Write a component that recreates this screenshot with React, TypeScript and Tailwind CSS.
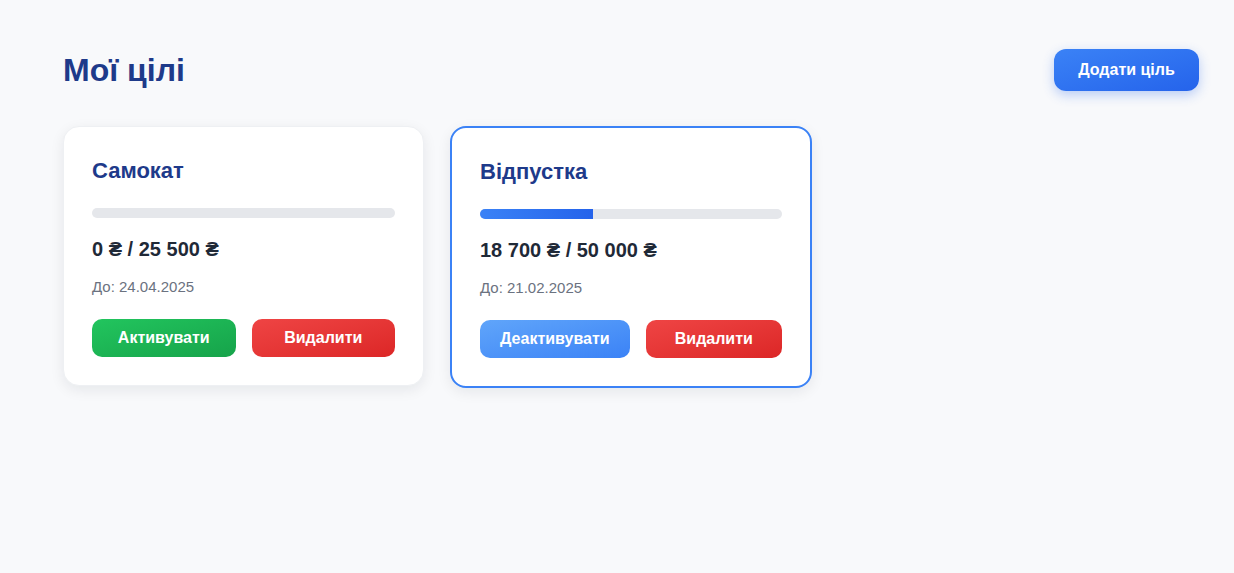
const goals = [
  { title: "Самокат", saved: 0, target: 25500, date: "24.04.2025", active: false },
  { title: "Відпустка", saved: 18700, target: 50000, date: "21.02.2025", active: true },
];

function money(n: number) {
  return n.toLocaleString("uk-UA").replace(/\s/g, " ") + " ₴";
}

function GoalCard({ goal }: { goal: (typeof goals)[number] }) {
  const pct = Math.round((goal.saved / goal.target) * 1000) / 10;
  return (
    <div
      className={
        goal.active
          ? "w-[362px] rounded-2xl border-2 border-[#3b82f6] bg-white px-7 pt-7 pb-7 shadow-[0_4px_14px_rgba(15,23,42,0.08)]"
          : "w-[361px] rounded-2xl border border-[#eef0f3] bg-white px-7 pt-7 pb-7 shadow-[0_4px_14px_rgba(15,23,42,0.08)]"
      }
    >
      <h3 className="text-[22px] leading-[32px] font-bold text-[#1e3a8a]">{goal.title}</h3>

      <div className="mt-[21px] h-[10px] w-full overflow-hidden rounded-full bg-[#e5e7eb]">
        <div
          className="h-full bg-gradient-to-r from-[#3b82f6] to-[#2563eb]"
          style={{ width: pct + "%" }}
        />
      </div>

      <p className="mt-[17px] text-[20px] leading-[28px] font-bold text-[#1f2937]">
        {money(goal.saved)} / {money(goal.target)}
      </p>

      <p className="mt-[13px] text-[15px] leading-[22px] text-[#6b7280]">До: {goal.date}</p>

      <div className="mt-[21px] flex gap-4">
        {goal.active ? (
          <button className="h-[38px] flex-1 rounded-[10px] bg-gradient-to-br from-[#60a5fa] to-[#3b82f6] px-5 text-[16px] font-bold text-white">
            Деактивувати
          </button>
        ) : (
          <button className="h-[38px] flex-1 rounded-[10px] bg-gradient-to-br from-[#22c55e] to-[#16a34a] px-5 text-[16px] font-bold text-white">
            Активувати
          </button>
        )}
        <button className="h-[38px] flex-1 rounded-[10px] bg-gradient-to-br from-[#ef4444] to-[#dc2626] px-5 text-[16px] font-bold text-white">
          Видалити
        </button>
      </div>
    </div>
  );
}

export default function App() {
  return (
    <div
      className="min-h-[573px] bg-[#f8f9fb] pt-[49px] pl-[63px] pr-[35px]"
      style={{ fontFamily: '"Liberation Sans", Arial, sans-serif' }}
    >
      <div className="flex items-center justify-between">
        <h1 className="text-[32px] leading-[42px] font-bold text-[#1e3a8a]">Мої цілі</h1>
        <button className="h-[42px] w-[145px] rounded-xl bg-gradient-to-br from-[#3b82f6] to-[#2563eb] text-[16px] font-bold text-white shadow-[0_4px_12px_rgba(37,99,235,0.3)]">
          Додати ціль
        </button>
      </div>

      <div className="mt-[35px] flex items-start gap-[26px]">
        {goals.map((g) => (
          <GoalCard key={g.title} goal={g} />
        ))}
      </div>
    </div>
  );
}
